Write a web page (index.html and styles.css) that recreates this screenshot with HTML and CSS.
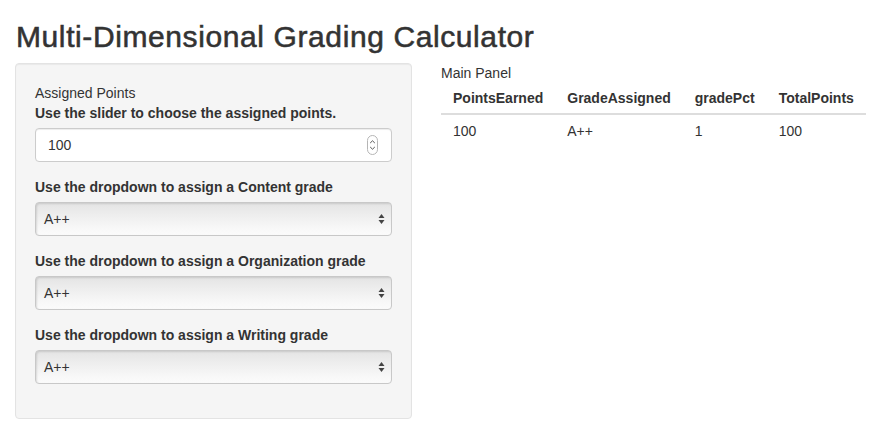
FILE: index.html
```html
<!DOCTYPE html>
<html>
<head>
<meta charset="utf-8">
<link rel="stylesheet" href="styles.css">
</head>
<body>
<div class="container">
  <h2 class="title">Multi-Dimensional Grading Calculator</h2>
  <div class="row">
    <div class="sidebar">
      <div class="well">
        <div class="plain">Assigned Points</div>
        <div class="form-group">
          <label class="lbl">Use the slider to choose the assigned points.</label>
          <div class="field">
            <input class="num" type="text" value="100">
            <span class="spin">
              <svg width="11" height="20" viewBox="0 0 11 20"><rect x="0.5" y="0.5" width="10" height="19" rx="5" fill="#fff" stroke="#b5b5b5"/><path d="M3.2 8 L5.5 5.8 L7.8 8" fill="none" stroke="#555" stroke-width="1"/><path d="M3.2 12 L5.5 14.2 L7.8 12" fill="none" stroke="#555" stroke-width="1"/></svg>
            </span>
          </div>
        </div>
        <div class="form-group">
          <label class="lbl">Use the dropdown to assign a Content grade</label>
          <div class="field">
            <div class="select">A++</div>
            <span class="arrows"><svg width="7" height="12" viewBox="0 0 7 12"><path d="M3.5 1 L6.5 5 L0.5 5 Z" fill="#444"/><path d="M3.5 11 L6.5 7 L0.5 7 Z" fill="#444"/></svg></span>
          </div>
        </div>
        <div class="form-group">
          <label class="lbl">Use the dropdown to assign a Organization grade</label>
          <div class="field">
            <div class="select">A++</div>
            <span class="arrows"><svg width="7" height="12" viewBox="0 0 7 12"><path d="M3.5 1 L6.5 5 L0.5 5 Z" fill="#444"/><path d="M3.5 11 L6.5 7 L0.5 7 Z" fill="#444"/></svg></span>
          </div>
        </div>
        <div class="form-group">
          <label class="lbl">Use the dropdown to assign a Writing grade</label>
          <div class="field">
            <div class="select">A++</div>
            <span class="arrows"><svg width="7" height="12" viewBox="0 0 7 12"><path d="M3.5 1 L6.5 5 L0.5 5 Z" fill="#444"/><path d="M3.5 11 L6.5 7 L0.5 7 Z" fill="#444"/></svg></span>
          </div>
        </div>
      </div>
    </div>
    <div class="main">
      <div class="plain">Main Panel</div>
      <table class="tbl">
        <thead>
          <tr><th>PointsEarned</th><th>GradeAssigned</th><th>gradePct</th><th>TotalPoints</th></tr>
        </thead>
        <tbody>
          <tr><td>100</td><td>A++</td><td>1</td><td>100</td></tr>
        </tbody>
      </table>
    </div>
  </div>
</div>
</body>
</html>
```
FILE: styles.css
```css
html, body {
  margin: 0;
  padding: 0;
  background: #fff;
}
body {
  font-family: "Liberation Sans", Arial, sans-serif;
  font-size: 14px;
  line-height: 20px;
  color: #333;
}
.container {
  padding: 0 15px;
}
.title {
  font-size: 30px;
  font-weight: 500;
  line-height: 33px;
  letter-spacing: 0.6px;
  -webkit-text-stroke: 0.55px #333;
  margin: 20px 0 10px 1px;
  color: #333;
}
.row {
  display: flex;
  margin: 0 -15px;
}
.sidebar {
  width: 397px;
  padding: 0 15px;
  flex: none;
}
.main {
  flex: 1;
  padding: 0 15px 0 14px;
}
.well {
  background: #f5f5f5;
  border: 1px solid #e3e3e3;
  border-radius: 4px;
  padding: 19px;
  box-shadow: inset 0 1px 1px rgba(0,0,0,0.05);
}
.form-group {
  margin-bottom: 15px;
}
.lbl {
  display: inline-block;
  font-weight: bold;
  margin-bottom: 5px;
}
.field {
  position: relative;
}
.num {
  display: block;
  box-sizing: border-box;
  width: 100%;
  height: 34px;
  padding: 6px 12px;
  font-family: inherit;
  font-size: 14px;
  color: #333;
  background: #fff;
  border: 1px solid #ccc;
  border-radius: 4px;
  box-shadow: inset 0 1px 1px rgba(0,0,0,0.075);
  outline: none;
}
.spin {
  position: absolute;
  right: 14px;
  top: 7px;
  display: block;
  line-height: 0;
}
.select {
  box-sizing: border-box;
  height: 34px;
  padding: 6px 8px;
  border: 1px solid #c8c8c8;
  border-radius: 4px;
  background: linear-gradient(#e4e4e4 0%, #ededed 35%, #f8f8f8 80%, #fbfbfb 100%);
  box-shadow: inset 1px 1px 2px rgba(0,0,0,0.12);
  color: #333;
  font-size: 14px;
}
.arrows {
  position: absolute;
  right: 7px;
  top: 11px;
  line-height: 0;
}
.tbl {
  border-collapse: collapse;
  margin-bottom: 20px;
}
.tbl th {
  text-align: left;
  font-weight: bold;
  padding: 5px 12px 5px 12px;
  border-bottom: 2px solid #ddd;
}
.tbl td {
  padding: 6px 12px 5px 12px;
}
```
